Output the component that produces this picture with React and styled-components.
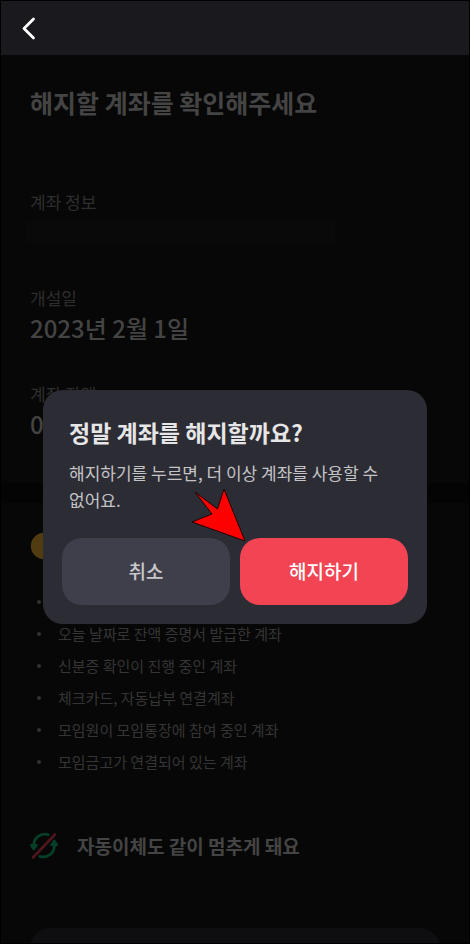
import React from "react";
import styled, { createGlobalStyle } from "styled-components";

const GlobalStyle = createGlobalStyle`
  *, *::before, *::after { box-sizing: border-box; }
  body {
    margin: 0;
    background: #000;
    font-family: "Noto Sans CJK KR", "Noto Sans", sans-serif;
  }
  h1, h2, p, ul, dl, dd { margin: 0; padding: 0; }
`;

const Screen = styled.div`
  height: 100vh;
  overflow: hidden;
  display: flex;
  flex-direction: column;
  background: #070707;
  border: 1px solid #000;
`;

const Header = styled.header`
  flex: none;
  display: flex;
  align-items: center;
  height: 54px;
  padding: 0 12px;
  background: #19191e;
`;

const BackButton = styled.button`
  display: grid;
  place-items: center;
  width: 32px;
  height: 32px;
  padding: 0;
  border: 0;
  background: none;
  color: #fff;
  cursor: pointer;
`;

const Content = styled.main`
  flex: 1;
  min-height: 0;
  overflow: hidden;
`;

const Section = styled.section`
  padding: ${(p) => p.$padding};
`;

const PageTitle = styled.h1`
  color: #444;
  font-size: 25px;
  font-weight: 700;
  line-height: 36px;
`;

const InfoList = styled.dl`
  display: grid;
  gap: 38px;
  margin-top: 70px;
`;

const InfoItem = styled.div`
  display: grid;
  gap: 2px;
`;

const InfoLabel = styled.dt`
  color: #2e2e2e;
  font-size: 17px;
  line-height: 24px;
`;

const InfoValue = styled.dd`
  display: flex;
  align-items: center;
  height: 32px;
  color: #444;
  font-size: 24px;
  font-weight: 500;
  line-height: 32px;
`;

const MaskedValue = styled.span`
  width: 75%;
  height: 22px;
  margin-left: -3px;
  background: #090909;
`;

const Divider = styled.div`
  height: 20px;
  background: #040404;
`;

const NoticeHeading = styled.div`
  display: flex;
  align-items: center;
  gap: 19px;
  min-height: 30px;
`;

const NoticeTitle = styled.h2`
  color: #444;
  font-size: 19px;
  font-weight: 700;
  line-height: 30px;
`;

const NoticeList = styled.ul`
  display: grid;
  gap: 8px;
  margin-top: 29px;
  padding-left: 7px;
  list-style: none;
`;

const NoticeItem = styled.li`
  display: flex;
  align-items: center;
  gap: 17px;
  min-height: 24px;
  color: #353535;
  font-size: 15px;
  line-height: 24px;

  &::before {
    content: "";
    width: 4px;
    height: 4px;
    border-radius: 50%;
    background: #303030;
  }
`;

const SummaryCard = styled.div`
  height: 120px;
  margin-top: 67px;
  border-radius: 20px;
  background: #0e0e10;
`;

const Overlay = styled.div`
  position: fixed;
  inset: 0;
  display: flex;
  align-items: center;
  padding: 70px 43px 0;
`;

const Dialog = styled.div`
  flex: 1;
  padding: 27px 19px 19px;
  border-radius: 20px;
  background: #2c2c35;
`;

const DialogTitle = styled.h2`
  padding: 0 7px;
  color: #e6e6e6;
  font-size: 23px;
  font-weight: 700;
  line-height: 30px;
`;

const DialogText = styled.p`
  margin-top: 12px;
  padding: 0 7px;
  color: #c4c4c6;
  font-size: 17px;
  line-height: 27px;
  word-break: keep-all;
`;

const ButtonRow = styled.div`
  display: grid;
  grid-template-columns: 1fr 1fr;
  gap: 10px;
  margin-top: 25px;
`;

const ActionButton = styled.button`
  position: relative;
  height: 67px;
  padding: 0 0 2px;
  border: 0;
  border-radius: 20px;
  background: ${(p) => (p.$danger ? "#f24452" : "#3f3f4b")};
  color: ${(p) => (p.$danger ? "#fff" : "#c8c8cb")};
  font-family: inherit;
  font-size: 19px;
  font-weight: 500;
  cursor: pointer;
`;

const Pointer = styled.svg`
  position: absolute;
  left: -50px;
  top: -51px;
  pointer-events: none;
`;

const accountInfo = [
  { label: "계좌 정보" },
  { label: "개설일", value: "2023년 2월 1일" },
  { label: "계좌 잔액", value: "0원" },
];

const blockedAccounts = [
  "",
  "오늘 날짜로 잔액 증명서 발급한 계좌",
  "신분증 확인이 진행 중인 계좌",
  "체크카드, 자동납부 연결계좌",
  "모임원이 모임통장에 참여 중인 계좌",
  "모임금고가 연결되어 있는 계좌",
];

function BackIcon() {
  return (
    <svg width="32" height="32" viewBox="0 0 32 32" fill="none" aria-hidden="true">
      <path d="M20.500 7 11 16.500l9.500 9.500" stroke="currentColor" strokeWidth="2.800" strokeLinecap="round" strokeLinejoin="round" />
    </svg>
  );
}

function WarningIcon() {
  return (
    <svg width="28" height="28" viewBox="0 0 28 28" aria-hidden="true">
      <circle cx="14" cy="14" r="13.200" fill="#513c12" />
      <path d="M14 7v8M14 18v2.500" stroke="#1c1608" strokeWidth="2" />
    </svg>
  );
}

function TransferOffIcon() {
  return (
    <svg width="28" height="28" viewBox="0 0 28 28" fill="none" aria-hidden="true">
      <g stroke="#064029" strokeWidth="2.800" strokeLinecap="round">
        <path d="M3.700 14C3.700 6 10 .8 18 2.600" />
        <path d="M24.300 13c.4 8-6.600 13.500-14.500 11.500" />
      </g>
      <path d="M.8 13h6l-3 4.500zM21.200 13h6l-3-4.500z" fill="#064029" stroke="#064029" strokeWidth="2" strokeLinejoin="round" />
      <path d="M3 25.500 25 2.500" stroke="#4d151d" strokeWidth="2.800" strokeLinecap="round" />
    </svg>
  );
}

export default function App() {
  return (
    <>
      <GlobalStyle />
      <Screen>
        <Header>
          <BackButton type="button" aria-label="뒤로">
            <BackIcon />
          </BackButton>
        </Header>
        <Content>
          <Section $padding="29px 29px 43px">
            <PageTitle>해지할 계좌를 확인해주세요</PageTitle>
            <InfoList>
              {accountInfo.map(({ label, value }) => (
                <InfoItem key={label}>
                  <InfoLabel>{label}</InfoLabel>
                  <InfoValue>{value || <MaskedValue />}</InfoValue>
                </InfoItem>
              ))}
            </InfoList>
          </Section>
          <Divider />
          <Section $padding="28px 29px 0">
            <NoticeHeading>
              <WarningIcon />
            </NoticeHeading>
            <NoticeList>
              {blockedAccounts.map((text, i) => (
                <NoticeItem key={i}>{text}</NoticeItem>
              ))}
            </NoticeList>
          </Section>
          <Section $padding="57px 29px 0">
            <NoticeHeading>
              <TransferOffIcon />
              <NoticeTitle>자동이체도 같이 멈추게 돼요</NoticeTitle>
            </NoticeHeading>
            <SummaryCard />
          </Section>
        </Content>
      </Screen>
      <Overlay>
        <Dialog role="alertdialog" aria-modal="true" aria-labelledby="close-title" aria-describedby="close-text">
          <DialogTitle id="close-title">정말 계좌를 해지할까요?</DialogTitle>
          <DialogText id="close-text">해지하기를 누르면, 더 이상 계좌를 사용할 수 없어요.</DialogText>
          <ButtonRow>
            <ActionButton type="button">취소</ActionButton>
            <ActionButton type="button" $danger>
              해지하기
              <Pointer width="58" height="58" viewBox="0 0 58 58" aria-hidden="true">
                <path d="M5 5 27.500 22 34 2l21 52L2 35l20-8z" fill="#fe0000" stroke="#200" strokeWidth="1" strokeLinejoin="round" />
              </Pointer>
            </ActionButton>
          </ButtonRow>
        </Dialog>
      </Overlay>
    </>
  );
}
